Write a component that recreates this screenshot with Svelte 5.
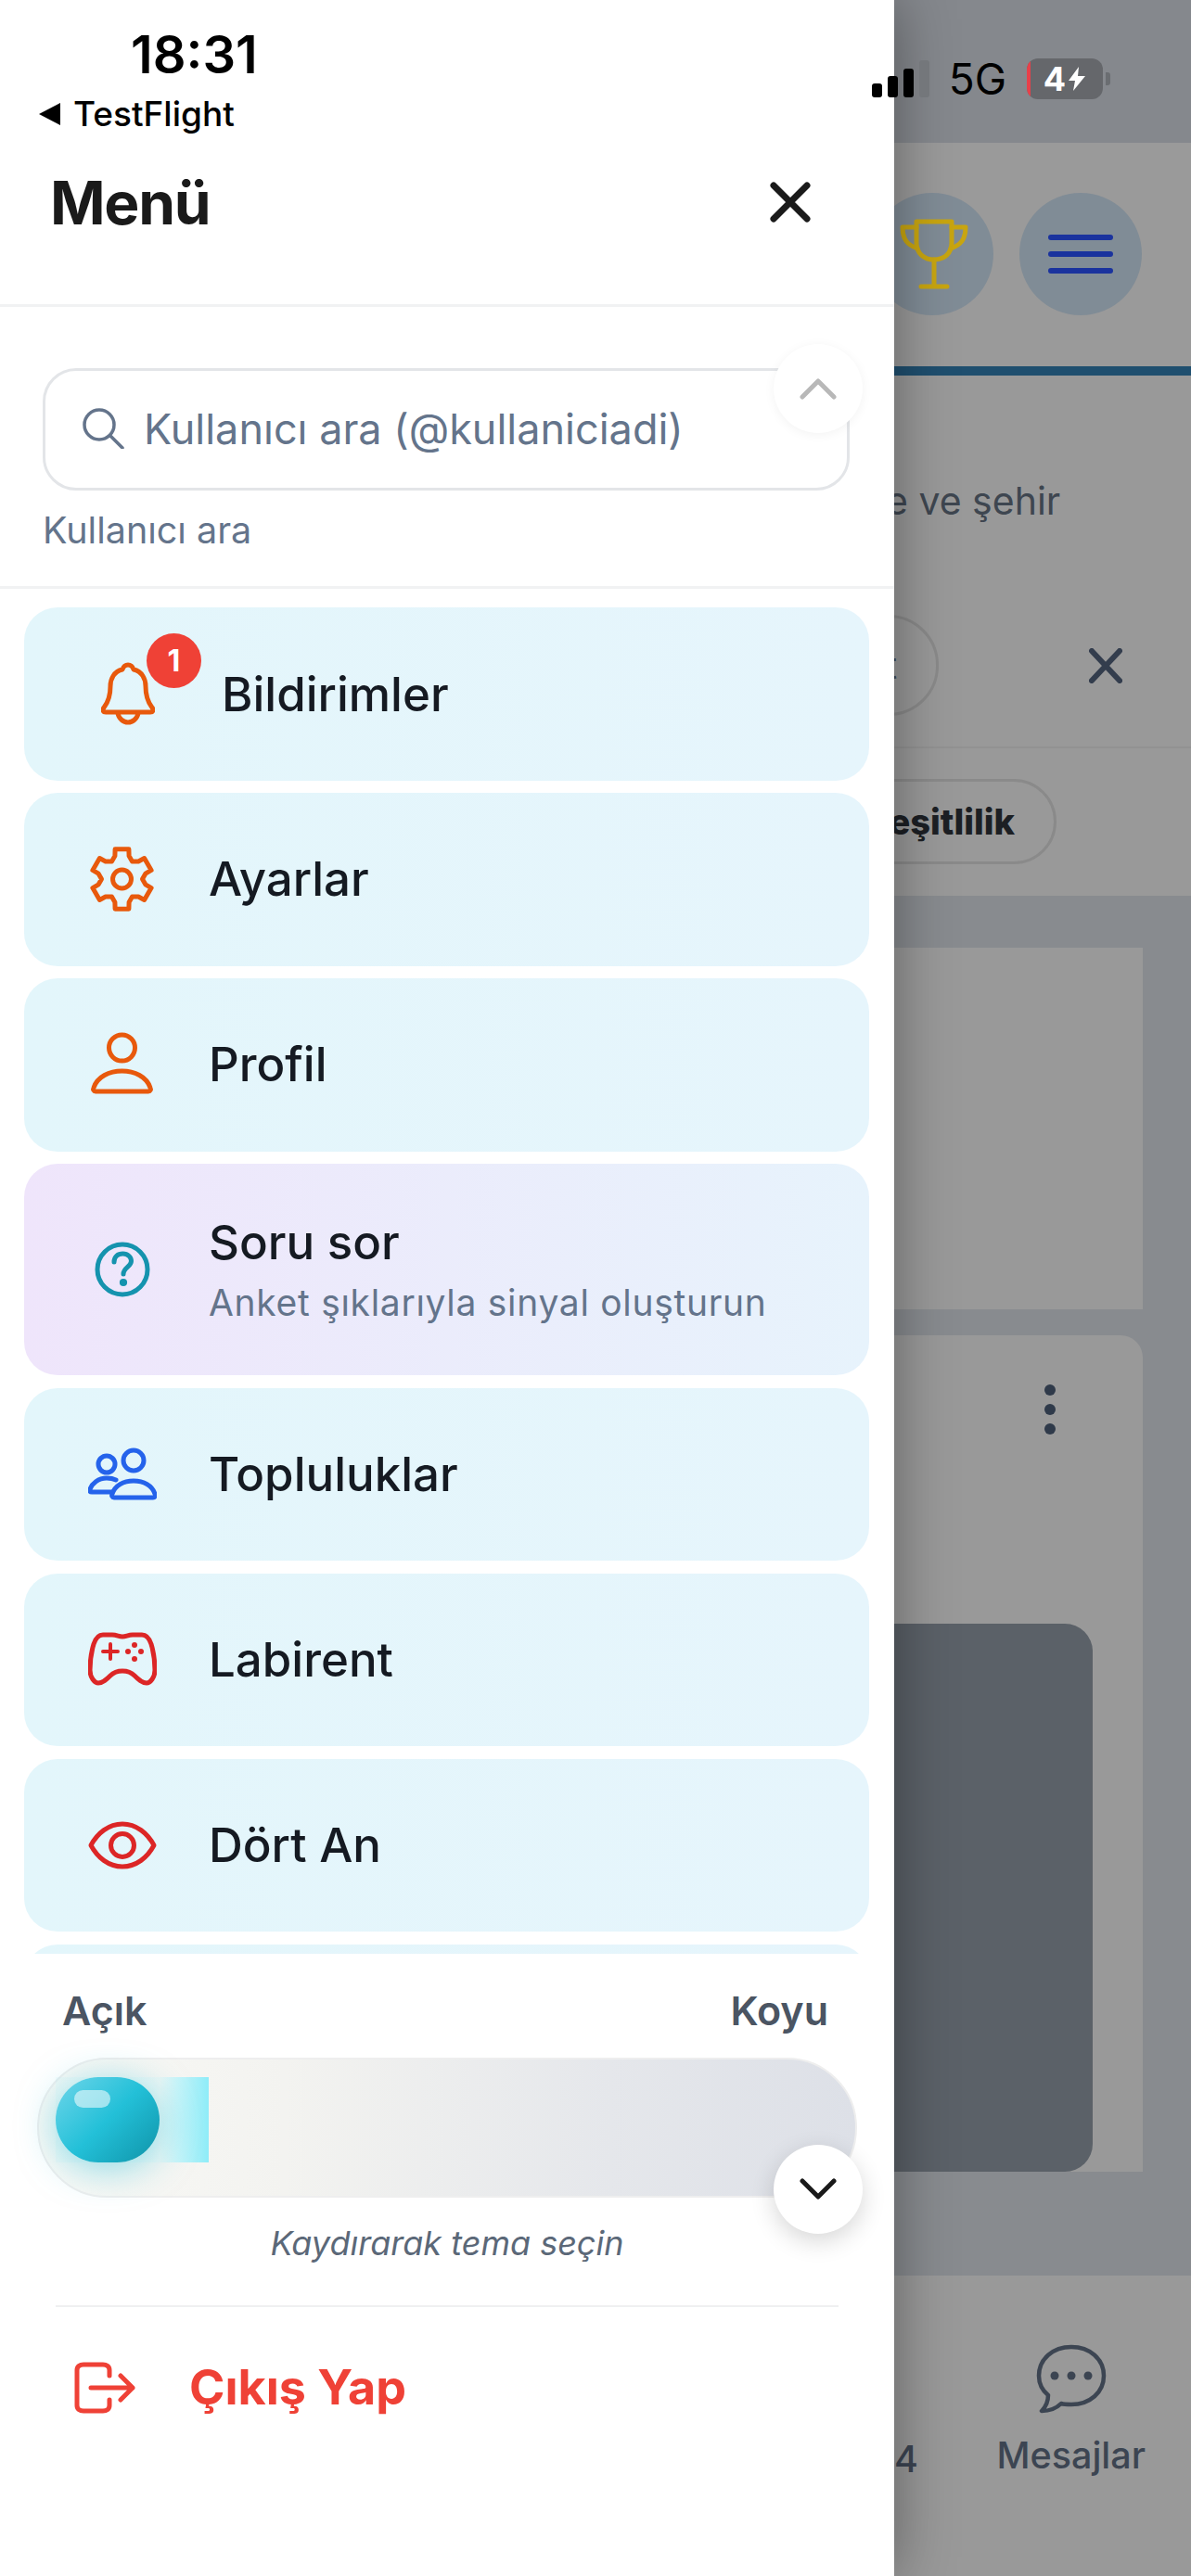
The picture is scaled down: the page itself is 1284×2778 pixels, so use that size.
<script lang="ts">
	function gearPath(cx: number, cy: number) {
		let d = '';
		for (let i = 0; i < 6; i++) {
			const a = (i * 60 - 90) * (Math.PI / 180);
			const pts = [
				[22, -30],
				[26, -17],
				[33, -13],
				[33, 13],
				[26, 17]
			].map(([r, off]) => {
				const t = a + (off * Math.PI) / 180;
				return `${(cx + r * Math.cos(t)).toFixed(1)} ${(cy + r * Math.sin(t)).toFixed(1)}`;
			});
			d += (i === 0 ? 'M' : 'L') + pts.join('L');
		}
		return d + 'Z';
	}

	const items = [
		{ label: 'Ayarlar', icon: 'gear', color: '#e8590c' },
		{ label: 'Profil', icon: 'user', color: '#e8590c' },
		{ label: 'Soru sor', sub: 'Anket şıklarıyla sinyal oluşturun', icon: 'question', color: '#1593ae' },
		{ label: 'Topluluklar', icon: 'users', color: '#2563eb' },
		{ label: 'Labirent', icon: 'game', color: '#dc2626' },
		{ label: 'Dört An', icon: 'eye', color: '#dc2626' },
		{ label: '', icon: '', color: '' }
	];
</script>

<div class="screen">
	<aside class="panel">
		<header class="panel-head">
			<h1>Menü</h1>
			<svg class="close" width="44" height="44" viewBox="0 0 44 44" fill="none" stroke="#1a1a1a" stroke-width="7" stroke-linecap="round">
				<path d="M4 4l36 36M40 4L4 40" />
			</svg>
		</header>

		<section class="search">
			<div class="search-box">
				<svg width="46" height="44" viewBox="0 0 46 44" fill="none" stroke="#64748b" stroke-width="3.5" stroke-linecap="round">
					<circle cx="19" cy="18" r="16" />
					<path d="M31 30l13 13" />
				</svg>
				<span>Kullanıcı ara (@kullaniciadi)</span>
			</div>
			<p>Kullanıcı ara</p>
		</section>

		<nav class="list">
			<a class="item bell-item" href="#bildirimler">
				<span class="bell">
					<svg width="58" height="68" viewBox="0 0 58 68" fill="none" stroke="#e8590c" stroke-width="5" stroke-linejoin="round" stroke-linecap="round">
						<path d="M29 3C26 3 24 5 23 8C14 10 10 18 10 26C10 37 7 44 3 49C1 52 2 54 5 54H53C56 54 57 52 55 49C51 44 48 37 48 26C48 18 44 10 35 8C34 5 32 3 29 3Z" />
						<path d="M18 55C19 61 24 65 29 65C34 65 39 61 40 55" />
					</svg>
					<b class="badge">1</b>
				</span>
				<span class="label">Bildirimler</span>
			</a>

			{#each items as item}
				<a class="item" class:ask={item.icon === 'question'} href="#{item.label}">
					<svg class="icon" width="74" height="74" viewBox="0 0 74 74" fill="none" stroke={item.color} stroke-width="5" stroke-linejoin="round" stroke-linecap="round">
						{#if item.icon === 'gear'}
							<path d={gearPath(36.5, 37)} />
							<circle cx="36.5" cy="37" r="10" />
						{:else if item.icon === 'user'}
							<circle cx="36.5" cy="19" r="14" />
							<path d="M8 66C6 66 5 64 6 62C10 50 23 44 36.5 44C50 44 63 50 67 62C68 64 67 66 65 66Z" />
						{:else if item.icon === 'question'}
							<circle cx="37" cy="37" r="27" />
							<path d="M28 29C28 23 32 20 37.5 20C43 20 46.5 24 46.5 28C46.5 34 38 35 38 42" />
							<circle cx="38" cy="51" r="1.6" fill={item.color} />
						{:else if item.icon === 'users'}
							<ellipse cx="49" cy="22" rx="11" ry="11" />
							<ellipse cx="20" cy="26" rx="9" ry="9" />
							<path d="M28 62C26 62 25 60 26 58C29 49 38 44 49 44C60 44 69 49 72 58C73 60 72 62 70 62Z" />
							<path d="M30 43C26 41 23 41 20 41C11 41 4 47 2 53C1 55 2 56 4 56H25" />
						{:else if item.icon === 'game'}
							<path d="M16 10H26C31 10 33 12 37 12C41 12 43 10 48 10H58C63 10 66 14 68 20C71 30 72 38 72 48C72 56 67 62 63 62C58 62 54 58 50 54C46 50 42 49 37 49C32 49 28 50 24 54C20 58 16 62 11 62C7 62 2 56 2 48C2 38 3 30 6 20C8 14 11 10 16 10Z" />
							<path d="M16 28H32M24 20V36" stroke-width="4" />
							<g fill={item.color} stroke="none">
								<circle cx="50" cy="21" r="3" />
								<circle cx="43" cy="28" r="3" />
								<circle cx="57" cy="28" r="3" />
								<circle cx="50" cy="36" r="3" />
							</g>
						{:else if item.icon === 'eye'}
							<path d="M3 37C10 24 22 14 37 14C52 14 64 24 71 37C64 50 52 60 37 60C22 60 10 50 3 37Z" />
							<circle cx="37" cy="37" r="12.5" />
						{/if}
					</svg>
					<span class="text">
						<span class="label">{item.label}</span>
						{#if item.sub}<small>{item.sub}</small>{/if}
					</span>
				</a>
			{/each}
		</nav>

		<footer class="bottom">
			<div class="ends"><span>Açık</span><span>Koyu</span></div>
			<div class="track">
				<div class="trail"></div>
				<div class="knob"><i></i></div>
			</div>
			<p class="hint">Kaydırarak tema seçin</p>
			<a class="logout" href="#cikis">
				<svg width="66" height="56" viewBox="0 0 66 56" fill="none" stroke="#ef4136" stroke-width="5" stroke-linecap="round" stroke-linejoin="round">
					<path d="M38 15V9C38 5 35 3 31 3H10C6 3 3 5 3 9V47C3 51 6 53 10 53H31C35 53 38 51 38 47V41" />
					<path d="M18 28H63M50 15L63 28L50 41" />
				</svg>
				<span>Çıkış Yap</span>
			</a>
		</footer>

		<button class="scroll up" aria-label="Yukarı">
			<svg width="40" height="24" viewBox="0 0 40 24" fill="none" stroke="#b8b8b8" stroke-width="5" stroke-linecap="round" stroke-linejoin="round"><path d="M3 21L20 4L37 21" /></svg>
		</button>
		<button class="scroll down" aria-label="Aşağı">
			<svg width="40" height="24" viewBox="0 0 40 24" fill="none" stroke="#1a1a1a" stroke-width="5" stroke-linecap="round" stroke-linejoin="round"><path d="M3 3L20 20L37 3" /></svg>
		</button>
	</aside>

	<!-- dimmed page behind the drawer -->
	<div class="behind">
		<div class="b-status"></div>
		<div class="b-header">
			<span class="round">
				<svg class="trophy" width="74" height="76" viewBox="0 0 74 76" fill="none" stroke="#c8a510" stroke-width="5" stroke-linejoin="round" stroke-linecap="round">
					<path d="M18 3H56V26C56 37 48 44 37 44C26 44 18 37 18 26Z" />
					<path d="M18 9H3C3 22 8 28 19 32M56 9H71C71 22 66 28 55 32M37 44V72M23 73H51" />
				</svg>
			</span>
			<span class="round">
				<svg width="70" height="42" viewBox="0 0 70 42" stroke="#1a339e" stroke-width="6" stroke-linecap="round"><path d="M3 3H67M3 21H67M3 39H67" /></svg>
			</span>
		</div>
		<div class="b-line"></div>
		<div class="b-filter">
			<p>e ve şehir</p>
			<div class="b-row">
				<span class="chip small">t</span>
				<svg width="36" height="38" viewBox="0 0 36 38" stroke="#333d4d" stroke-width="6" stroke-linecap="round"><path d="M3 3l30 32M33 3L3 35" /></svg>
			</div>
		</div>
		<div class="b-chips"><span class="chip wide">eşitlilik</span></div>
		<div class="b-feed">
			<div class="card first"></div>
			<div class="card second">
				<span class="dots"><i></i><i></i><i></i></span>
				<div class="photo"></div>
			</div>
		</div>
		<div class="b-nav">
			<span class="count">4</span>
			<span class="tab">
				<svg width="76" height="76" viewBox="0 0 76 76" fill="none" stroke="#3c4552" stroke-width="4.5" stroke-linejoin="round">
					<path d="M38 3C18 3 3 16 3 34C3 43 7 50 13 55C13 62 10 68 6 72C14 72 22 69 27 64C30 65 34 65 38 65C58 65 73 52 73 34C73 16 58 3 38 3Z" />
					<g fill="#3c4552" stroke="none">
						<circle cx="20" cy="34" r="4.5" />
						<circle cx="38" cy="34" r="4.5" />
						<circle cx="56" cy="34" r="4.5" />
					</g>
				</svg>
				<span>Mesajlar</span>
			</span>
		</div>
	</div>

	<div class="status">
		<div class="status-left">
			<span class="time">18:31</span>
			<span class="back"><i></i>TestFlight</span>
		</div>
		<div class="status-right">
			<span class="bars"><i></i><i></i><i></i><i></i></span>
			<span class="net">5G</span>
			<span class="battery"><i></i>4<svg width="20" height="26" viewBox="0 0 20 26" fill="#fff"><path d="M12 0L1 15H8L6 26L19 10H11Z" /></svg></span>
			<span class="nub"></span>
		</div>
	</div>
</div>

<style>
	:global(body) {
		margin: 0;
		background: #fff;
	}

	.screen {
		position: relative;
		display: flex;
		width: 1284px;
		height: 2778px;
		overflow: hidden;
		font-family: Inter, 'Liberation Sans', sans-serif;
	}

	.panel {
		position: relative;
		z-index: 2;
		display: flex;
		flex-direction: column;
		flex: 0 0 964px;
		background: #fff;
		box-shadow: 0 0 60px rgba(0, 0, 0, 0.38);
	}

	.panel-head {
		display: flex;
		align-items: flex-start;
		justify-content: space-between;
		box-sizing: border-box;
		height: 331px;
		padding: 108px 90px 0 54px;
		border-bottom: 3px solid #f1f2f3;
		flex: none;
	}

	h1 {
		margin: 76px 0 0;
		font-size: 64px;
		line-height: 70px;
		font-weight: 700;
		color: #1a1a1a;
		letter-spacing: -1.3px;
	}

	.close {
		margin-top: 88px;
	}

	.search {
		box-sizing: border-box;
		height: 304px;
		padding: 66px 48px 0 46px;
		border-bottom: 3px solid #f1f2f3;
		flex: none;
	}

	.search-box {
		display: flex;
		align-items: center;
		gap: 21px;
		box-sizing: border-box;
		height: 132px;
		padding: 0 0 2px 39px;
		border: 3px solid #e3e5e8;
		border-radius: 36px;
		font-size: 45px;
		color: #64748b;
	}

	.search p {
		margin: 20px 0 0;
		font-size: 39.5px;
		line-height: 46px;
		color: #64748b;
	}

	.list {
		display: flex;
		flex-direction: column;
		gap: 13.5px;
		flex: 1;
		min-height: 0;
		overflow: hidden;
		padding: 20px 27px 0 26px;
	}

	.item {
		display: flex;
		align-items: center;
		gap: 56px;
		flex: 0 0 186.5px;
		box-sizing: border-box;
		padding-left: 69px;
		border-radius: 36px;
		background: linear-gradient(90deg, #e3f6fb, #e6f5fc);
		color: #151a22;
		text-decoration: none;
	}

	.item.ask {
		flex-basis: 228px;
		background: linear-gradient(90deg, #efe5fb, #e7f3fc);
	}

	.bell-item {
		padding-left: 83px;
		gap: 72px;
	}

	.bell-item .label {
		padding-top: 2px;
	}

	.bell {
		position: relative;
		display: block;
		height: 68px;
	}

	.badge {
		position: absolute;
		top: -31px;
		left: 49px;
		width: 59px;
		height: 59px;
		border-radius: 50%;
		background: #ef4136;
		color: #fff;
		font-size: 32px;
		line-height: 59px;
		text-align: center;
	}

	.icon {
		flex: none;
	}

	.text {
		display: flex;
		flex-direction: column;
		gap: 11px;
	}

	.label {
		font-size: 51px;
		line-height: 60px;
		font-weight: 500;
	}

	small {
		font-size: 39px;
		line-height: 48px;
		color: #64748b;
		letter-spacing: 0.7px;
	}

	.bottom {
		display: flex;
		flex-direction: column;
		box-sizing: border-box;
		flex: 0 0 671px;
		padding: 36px 40px 0;
		background: #fff;
	}

	.ends {
		display: flex;
		justify-content: space-between;
		padding: 0 31px 0 27px;
		font-size: 43px;
		line-height: 50px;
		font-weight: 600;
		color: #4b5563;
	}

	.track {
		position: relative;
		box-sizing: border-box;
		height: 151px;
		margin-top: 26px;
		border: 2px solid #eeeeee;
		border-radius: 76px;
		background: linear-gradient(90deg, #f9f9f6, #f3f3f0 30%, #e5e7eb 70%, #dde0e7);
	}

	.trail {
		position: absolute;
		left: 18px;
		top: 19px;
		width: 165px;
		height: 92px;
		background: linear-gradient(90deg, rgba(103, 232, 249, 0.06), rgba(207, 247, 250, 0.25) 68%, rgba(190, 244, 250, 0.85) 80%, #8eecf8);
	}

	.knob {
		position: absolute;
		left: 18px;
		top: 19px;
		width: 112px;
		height: 92px;
		border-radius: 46px;
		background: linear-gradient(135deg, #6fd6ea, #23c0d8 50%, #0f93a8);
		box-shadow: 0 6px 40px rgba(34, 190, 215, 0.5);
	}

	.knob i {
		position: absolute;
		left: 20px;
		top: 14px;
		width: 39px;
		height: 19px;
		border-radius: 10px;
		background: rgba(255, 255, 255, 0.55);
	}

	.hint {
		margin: 27px 0 0;
		font-size: 36px;
		line-height: 44px;
		font-style: italic;
		text-align: center;
		color: #5b6878;
	}

	.logout {
		display: flex;
		align-items: center;
		gap: 58px;
		margin: 45px 20px 0 20px;
		padding: 55px 0 0 20px;
		border-top: 2px solid #eff0f1;
		color: #ef4136;
		text-decoration: none;
		font-size: 52px;
		font-weight: 700;
	}

	/* floating scroll buttons over the drawer */
	.scroll {
		position: absolute;
		left: 834px;
		width: 96px;
		height: 96px;
		padding: 0;
		border: 0;
		border-radius: 50%;
		background: #fff;
		display: flex;
		align-items: center;
		justify-content: center;
	}

	.up {
		top: 371px;
		box-shadow: 0 2px 12px rgba(0, 0, 0, 0.05);
	}

	.down {
		top: 2313px;
		box-shadow: 0 8px 26px rgba(0, 0, 0, 0.16);
	}

	.behind {
		display: flex;
		flex-direction: column;
		flex: 0 0 320px;
		background: #888b8f;
	}

	.b-status {
		height: 154px;
		background: #85888d;
	}

	.b-header {
		display: flex;
		align-items: center;
		gap: 28px;
		box-sizing: border-box;
		height: 241px;
		margin-left: -25px;
		padding-bottom: 1px;
		background: #9a9a9a;
	}

	.round {
		display: flex;
		align-items: center;
		justify-content: center;
		width: 132px;
		height: 132px;
		border-radius: 50%;
		background: #808c96;
	}

	.trophy {
		margin-left: 3px;
	}

	.b-line {
		height: 10px;
		background: #1f4f6f;
	}

	.b-filter {
		box-sizing: border-box;
		height: 402px;
		background: #999;
		border-bottom: 2px solid #929292;
		padding-top: 110px;
	}

	.b-filter p {
		margin: 0 0 0 -9px;
		font-size: 41px;
		line-height: 50px;
		color: #3e4650;
	}

	.b-row {
		display: flex;
		align-items: center;
		justify-content: space-between;
		margin: 98px 74px 0 -60px;
	}

	.chip {
		box-sizing: border-box;
		border: 3px solid #8a8a8a;
		border-radius: 60px;
		background: #999;
		text-align: right;
		color: #3e4650;
	}

	.chip.small {
		width: 108px;
		height: 109px;
		padding-right: 42px;
		font-size: 40px;
		line-height: 103px;
	}

	.b-chips {
		height: 159px;
		background: #999;
		padding-top: 33px;
		box-sizing: border-box;
	}

	.chip.wide {
		display: block;
		box-sizing: border-box;
		width: 235px;
		height: 92px;
		margin-left: -60px;
		padding-right: 42px;
		font-size: 38px;
		line-height: 86px;
		font-weight: 800;
		color: #1c1f24;
	}

	.b-feed {
		display: flex;
		flex-direction: column;
		gap: 28px;
		box-sizing: border-box;
		height: 1488px;
		padding: 56px 52px 112px 0;
	}

	.card {
		background: #999;
	}

	.card.first {
		height: 390px;
	}

	.card.second {
		position: relative;
		display: flex;
		flex-direction: column;
		height: 902px;
		border-radius: 0 24px 0 0;
	}

	.dots {
		display: flex;
		flex-direction: column;
		gap: 9px;
		margin: 53px 0 0 162px;
	}

	.dots i {
		width: 12px;
		height: 12px;
		border-radius: 50%;
		background: #2f3a4a;
	}

	.photo {
		margin: auto 54px 0 0;
		height: 591px;
		border-radius: 0 30px 30px 0;
		background: #5b6168;
	}

	.b-nav {
		position: relative;
		flex: 1;
		display: flex;
		justify-content: flex-end;
		padding: 74px 49px 0 0;
		background: #999;
		font-size: 39.5px;
		font-weight: 500;
		color: #3c4552;
	}

	.count {
		position: absolute;
		left: 0;
		top: 174px;
	}

	.tab {
		display: flex;
		flex-direction: column;
		align-items: center;
		gap: 20px;
	}

	/* status bar sits over both the drawer and the page */
	.status {
		position: absolute;
		z-index: 3;
		top: 0;
		left: 0;
		right: 0;
		display: flex;
		justify-content: space-between;
		padding-right: 87px;
		color: #000;
	}

	.status-left {
		display: flex;
		flex-direction: column;
		padding: 30px 0 0 42px;
	}

	.time {
		margin-left: 99px;
		font-size: 56px;
		line-height: 58px;
		font-weight: 600;
	}

	.back {
		display: flex;
		align-items: center;
		gap: 14px;
		margin-top: 14px;
		font-size: 37px;
		line-height: 42px;
		font-weight: 500;
	}

	.back i {
		width: 0;
		height: 0;
		border-style: solid;
		border-width: 12px 23px 12px 0;
		border-color: transparent #000 transparent transparent;
	}

	.status-right {
		display: flex;
		align-items: center;
		height: 44px;
		margin-top: 63px;
	}

	.bars {
		display: flex;
		align-items: flex-end;
		gap: 6px;
		height: 40px;
		margin-right: 21px;
	}

	.bars i {
		width: 11px;
		border-radius: 3px;
		background: #000;
	}

	.bars i:nth-child(1) { height: 15px; }
	.bars i:nth-child(2) { height: 23px; }
	.bars i:nth-child(3) { height: 31px; }
	.bars i:nth-child(4) { height: 40px; background: #74777b; }

	.net {
		margin-right: 22px;
		font-size: 46px;
		font-weight: 400;
	}

	.battery {
		position: relative;
		display: flex;
		align-items: center;
		justify-content: center;
		gap: 2px;
		width: 82px;
		height: 44px;
		overflow: hidden;
		border-radius: 12px;
		background: #65676b;
		color: #fff;
		font-size: 36px;
		font-weight: 700;
	}

	.battery i {
		position: absolute;
		left: 0;
		top: 0;
		bottom: 0;
		width: 4px;
		background: #e8404a;
	}

	.nub {
		width: 5px;
		height: 14px;
		margin-left: 3px;
		border-radius: 0 3px 3px 0;
		background: #6a6d71;
	}
</style>
